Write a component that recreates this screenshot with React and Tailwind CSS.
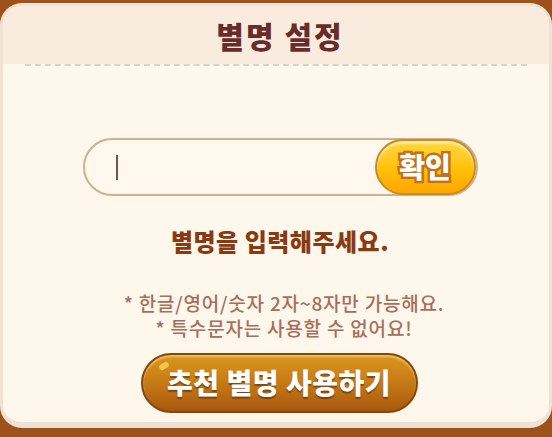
export default function App() {
  return (
    <div className="w-[552px] h-[437px] bg-[#9d521b] pt-[3px] pb-[9px] overflow-hidden" style={{ fontFamily: '"Noto Sans CJK KR", "Noto Sans", sans-serif' }}>
      <div className="h-full rounded-[22px] border-[3px] border-b-[6px] border-[#f0e2d3] bg-[#fef7eb] flex flex-col overflow-hidden">
        {/* Header */}
        <div className="h-[58px] bg-[#f9ecdf] flex items-center justify-center">
          <h1 className="text-[30px] font-black text-[#6a2b2b] tracking-[2px] leading-none ml-[8px]">별명 설정</h1>
        </div>
        <div className="mx-[22px] border-t-2 border-dashed border-[#dcd2c8]" />

        {/* Body */}
        <div className="flex flex-col items-center">
          <div className="mt-[72px] ml-[8px] w-[395px] h-[58px] rounded-full border-2 border-[#cdb196] bg-[#fff8ec] flex items-center justify-between pl-[31px] pr-0">
            <span className="w-[2px] h-[25px] bg-[#6d5444]" />
            <button className="w-[101px] h-[56px] rounded-full border-2 border-[#c98b22] bg-gradient-to-b from-[#ffd83a] via-[#ffc20a] to-[#ffa600] shadow-[inset_0_3px_2px_rgba(255,255,255,0.5)] flex items-center justify-center">
              <span className="text-[28px] font-black text-white leading-none [-webkit-text-stroke:5px_#c4721a] [paint-order:stroke_fill] mt-[-2px]">확인</span>
            </button>
          </div>

          <p className="mt-[30px] ml-[8px] text-[24px] font-black text-[#8a3a13] leading-[30px] tracking-[0.5px]">별명을 입력해주세요.</p>

          <div className="mt-[34px] ml-[16px] flex flex-col items-center text-[19px] leading-[25px] tracking-[0.8px] font-medium text-[#a86d5c]">
            <p>* 한글/영어/숫자 2자~8자만 가능해요.</p>
            <p>* 특수문자는 사용할 수 없어요!</p>
          </div>

          <button className="relative mt-[13px] ml-[6px] w-[277px] h-[60px] rounded-full border-2 border-[#874610] bg-gradient-to-b from-[#d9961f] via-[#c67a15] to-[#a8580e] shadow-[inset_0_2px_2px_rgba(255,220,140,0.6)] flex items-center justify-center">
            <span className="absolute left-[16px] top-[8px] w-[10px] h-[6px] rounded-full bg-[#f5c451] rotate-[-30deg]" />
            <span className="text-[28px] font-black text-white leading-none tracking-[0.5px] [text-shadow:0_2px_1px_rgba(90,40,5,0.6)] mt-[-2px]">추천 별명 사용하기</span>
          </button>
        </div>
      </div>
    </div>
  );
}
